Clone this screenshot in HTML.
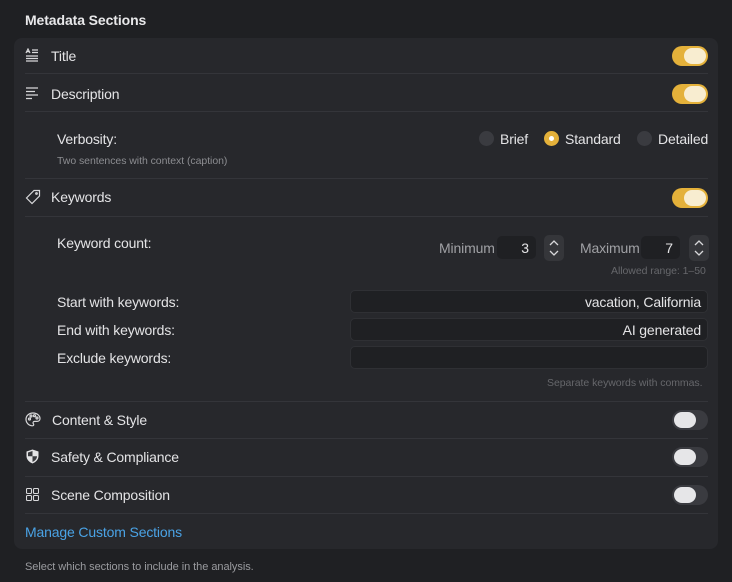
<!DOCTYPE html>
<html><head><style>
*{margin:0;padding:0;box-sizing:border-box}
body{width:732px;height:582px;background:#1f2023;font-family:"Liberation Sans",sans-serif;color:#e4e4e6;position:relative;overflow:hidden}
.a{position:absolute;white-space:nowrap}
.panel{position:absolute;left:14px;top:38px;width:704px;height:511px;background:#27282c;border-radius:8px}
.hr{position:absolute;left:25px;width:683px;height:1px;background:#34353a}
.lbl{font-size:14px;line-height:16px;letter-spacing:-0.15px}
.tg{position:absolute;left:672px;width:36px;height:20px;border-radius:10px}
.tg.on{background:#e4b13a}
.tg.on::after{content:"";position:absolute;right:2px;top:2px;width:22px;height:16px;border-radius:8px;background:#f8edd0}
.tg.off{background:#3a3b40}
.tg.off::after{content:"";position:absolute;left:2px;top:2px;width:22px;height:16px;border-radius:8px;background:#e6e6e8}
.inp{position:absolute;left:350px;width:358px;height:23px;background:#1f2023;border-radius:5px;border:1px solid #2f3034;font-size:14px;letter-spacing:-0.15px;text-align:right;padding:3px 6px 0 0;line-height:16px}
.num{position:absolute;top:236px;width:39px;height:23px;background:#1f2023;border-radius:5px;font-size:14px;text-align:right;padding:4px 7px 0 0}
.st{position:absolute;top:235px;width:20px;height:26px;background:#35363a;border-radius:5px}
.small{font-size:10.5px;color:#7d7e82;letter-spacing:-0.05px}
.ic{position:absolute;left:25px}
.rad{position:absolute;top:131px;width:15px;height:15px;border-radius:50%;background:#3a3b40}
</style></head><body>
<div class="a" style="left:25px;top:12px;font-size:14px;font-weight:bold;color:#e8e8ea;letter-spacing:-0.1px">Metadata Sections</div>
<div class="panel"></div>

<svg class="ic" style="top:48px" width="14" height="14" viewBox="0 0 14 14" fill="none" stroke="#d8d8da" stroke-width="1.2"><path d="M1 5L3 1L5 5M1.7 3.6H4.3M7 2H13M7 4.5H13M1 8H13M1 10.5H13M1 13H13"/></svg>
<div class="a lbl" style="left:51px;top:48px">Title</div>
<div class="tg on" style="top:46px"></div>
<div class="hr" style="top:73px"></div>

<svg class="ic" style="top:87px" width="14" height="13" viewBox="0 0 14 13" fill="none" stroke="#d8d8da" stroke-width="1.2"><path d="M1 1H13M1 4.5H10M1 8H13M1 11.5H7"/></svg>
<div class="a lbl" style="left:51px;top:86px">Description</div>
<div class="tg on" style="top:84px"></div>
<div class="hr" style="top:111px"></div>

<div class="a lbl" style="left:57px;top:131px">Verbosity:</div>
<div class="a small" style="left:57px;top:155px;color:#8c8d91">Two sentences with context (caption)</div>
<div class="rad" style="left:479px"></div>
<div class="a lbl" style="left:500px;top:131px">Brief</div>
<div class="rad" style="left:544px;background:#e4b13a"><div style="position:absolute;left:5px;top:5px;width:5px;height:5px;border-radius:50%;background:#fff"></div></div>
<div class="a lbl" style="left:565px;top:131px">Standard</div>
<div class="rad" style="left:637px"></div>
<div class="a lbl" style="left:658px;top:131px">Detailed</div>
<div class="hr" style="top:178px"></div>

<svg class="ic" style="top:189px" width="16" height="16" viewBox="0 0 16 16" fill="none" stroke="#d8d8da" stroke-width="1.2"><path d="M9 1.5H14.5V7L7 14.5L1.5 9Z"/><circle cx="11.5" cy="4.5" r="0.8"/></svg>
<div class="a lbl" style="left:51px;top:189px">Keywords</div>
<div class="tg on" style="top:188px"></div>
<div class="hr" style="top:216px"></div>

<div class="a lbl" style="left:57px;top:235px">Keyword count:</div>
<div class="a lbl" style="left:439px;top:240px;color:#a0a1a5">Minimum</div>
<div class="num" style="left:497px">3</div>
<div class="st" style="left:544px"><svg width="20" height="26" viewBox="0 0 20 26" fill="none" stroke="#d8d8da" stroke-width="1.3"><path d="M6 10L10 6L14 10M6 16L10 20L14 16"/></svg></div>
<div class="a lbl" style="left:580px;top:240px;color:#a0a1a5">Maximum</div>
<div class="num" style="left:641px">7</div>
<div class="st" style="left:689px"><svg width="20" height="26" viewBox="0 0 20 26" fill="none" stroke="#d8d8da" stroke-width="1.3"><path d="M6 10L10 6L14 10M6 16L10 20L14 16"/></svg></div>
<div class="a small" style="left:611px;top:265px;color:#66676b">Allowed range: 1–50</div>

<div class="a lbl" style="left:57px;top:294px">Start with keywords:</div>
<div class="inp" style="top:290px">vacation, California</div>
<div class="a lbl" style="left:57px;top:322px">End with keywords:</div>
<div class="inp" style="top:318px">AI generated</div>
<div class="a lbl" style="left:57px;top:350px">Exclude keywords:</div>
<div class="inp" style="top:346px"></div>
<div class="a small" style="left:547px;top:377px;color:#66676b">Separate keywords with commas.</div>
<div class="hr" style="top:401px"></div>

<svg class="ic" style="top:412px" width="16" height="15" viewBox="0 0 16 15" fill="none" stroke="#d8d8da" stroke-width="1.2"><path d="M8 1C4 1 1 3.8 1 7.3C1 11 4 13.8 7.5 13.8C9 13.8 9 12.5 8.3 11.6C7.6 10.6 8.3 9.4 9.6 9.4H12C13.8 9.4 15 8.2 15 6.6C15 3.6 12 1 8 1Z"/><circle cx="4.5" cy="7" r="1"/><circle cx="6" cy="4" r="1"/><circle cx="9.5" cy="3.7" r="1"/><circle cx="12" cy="6" r="1"/></svg>
<div class="a lbl" style="left:52px;top:412px">Content &amp; Style</div>
<div class="tg off" style="top:410px"></div>
<div class="hr" style="top:438px"></div>

<svg class="ic" style="top:449px;left:26px" width="13" height="15" viewBox="0 0 13 15"><path d="M6.5 0.5L12.5 2.5V7C12.5 10.5 10 13 6.5 14.5C3 13 0.5 10.5 0.5 7V2.5Z" fill="#e4e4e6"/><path d="M6.5 2V7.3H11V7.3C11 10 9 12 6.5 13ZM6.5 7.3H2V3.5L6.5 2Z" fill="#27282c" opacity="0.9"/></svg>
<div class="a lbl" style="left:51px;top:449px">Safety &amp; Compliance</div>
<div class="tg off" style="top:447px"></div>
<div class="hr" style="top:476px"></div>

<svg class="ic" style="top:488px;left:26px" width="13" height="13" viewBox="0 0 13 13" fill="none" stroke="#d8d8da" stroke-width="1.1"><rect x="0.5" y="0.5" width="5" height="5" rx="1"/><rect x="7.5" y="0.5" width="5" height="5" rx="1"/><rect x="0.5" y="7.5" width="5" height="5" rx="1"/><rect x="7.5" y="7.5" width="5" height="5" rx="1"/></svg>
<div class="a lbl" style="left:51px;top:487px">Scene Composition</div>
<div class="tg off" style="top:485px"></div>
<div class="hr" style="top:513px"></div>

<div class="a lbl" style="left:25px;top:524px;color:#4aa3e6">Manage Custom Sections</div>
<div class="a" style="left:25px;top:561px;font-size:11px;color:#9a9b9f;letter-spacing:-0.05px">Select which sections to include in the analysis.</div>
</body></html>
